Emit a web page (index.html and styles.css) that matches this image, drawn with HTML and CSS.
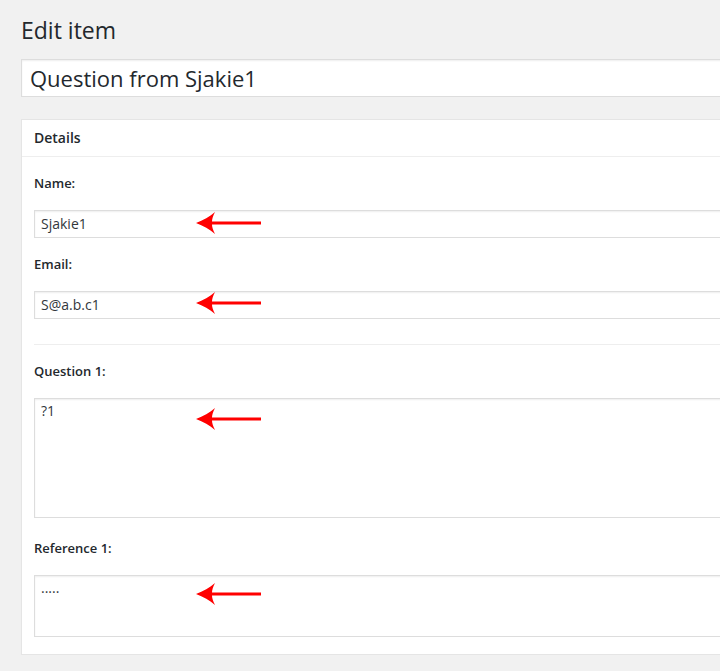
FILE: index.html
```html
<!DOCTYPE html>
<html lang="en">
<head>
<meta charset="utf-8">
<title>Edit item</title>
<link rel="stylesheet" href="styles.css">
</head>
<body>
<div class="wrap">
  <h1 class="page-title">Edit item</h1>
  <input class="title-input" type="text" value="Question from Sjakie1">
  <div class="postbox">
    <h2 class="hndle">Details</h2>
    <div class="inside">
      <div class="field">
        <label class="field-label">Name:</label>
        <div class="control">
          <input class="text-input" type="text" value="Sjakie1">
          <svg class="arrow arrow-name" viewBox="0 0 66 22" width="66" height="22"><path d="M0 11 C7 8.5 14 4.5 19 0 C17 4 16 7 16 9.5 L65 9.5 L65 12.5 L16 12.5 C16 15 17 18 19 22 C14 17.5 7 13.5 0 11 Z" fill="#f00"/></svg>
        </div>
      </div>
      <div class="field">
        <label class="field-label">Email:</label>
        <div class="control">
          <input class="text-input" type="text" value="S@a.b.c1">
          <svg class="arrow arrow-email" viewBox="0 0 66 22" width="66" height="22"><path d="M0 11 C7 8.5 14 4.5 19 0 C17 4 16 7 16 9.5 L65 9.5 L65 12.5 L16 12.5 C16 15 17 18 19 22 C14 17.5 7 13.5 0 11 Z" fill="#f00"/></svg>
        </div>
      </div>
      <hr class="sep">
      <div class="field">
        <label class="field-label">Question 1:</label>
        <div class="control">
          <textarea class="text-area tall">?1</textarea>
          <svg class="arrow arrow-question" viewBox="0 0 66 22" width="66" height="22"><path d="M0 11 C7 8.5 14 4.5 19 0 C17 4 16 7 16 9.5 L65 9.5 L65 12.5 L16 12.5 C16 15 17 18 19 22 C14 17.5 7 13.5 0 11 Z" fill="#f00"/></svg>
        </div>
      </div>
      <div class="field field-ref">
        <label class="field-label">Reference 1:</label>
        <div class="control">
          <textarea class="text-area short">.....</textarea>
          <svg class="arrow arrow-ref" viewBox="0 0 66 22" width="66" height="22"><path d="M0 11 C7 8.5 14 4.5 19 0 C17 4 16 7 16 9.5 L65 9.5 L65 12.5 L16 12.5 C16 15 17 18 19 22 C14 17.5 7 13.5 0 11 Z" fill="#f00"/></svg>
        </div>
      </div>
    </div>
  </div>
</div>
</body>
</html>
```
FILE: styles.css
```css
html, body {
  margin: 0;
  padding: 0;
  overflow: hidden;
  background: #f1f1f1;
}

body {
  font-family: "Open Sans", "Liberation Sans", sans-serif;
  color: #23282d;
  font-size: 13px;
}

.wrap {
  width: 1000px;
  margin-left: 21px;
  padding-top: 16px;
}

.page-title {
  margin: 0;
  font-size: 23px;
  font-weight: 400;
  line-height: 29px;
  color: #23282d;
}

.title-input {
  display: block;
  box-sizing: border-box;
  width: 100%;
  height: 38px;
  margin: 14px 0 0;
  padding: 3px 8px;
  font-family: inherit;
  font-size: 22px;
  line-height: normal;
  color: #23282d;
  background: #fff;
  border: 1px solid #ddd;
  box-shadow: inset 0 1px 2px rgba(0, 0, 0, 0.07);
  outline: none;
}

.postbox {
  margin-top: 22px;
  background: #fff;
  border: 1px solid #e5e5e5;
  box-shadow: 0 1px 1px rgba(0, 0, 0, 0.04);
}

.hndle {
  margin: 0;
  padding: 8px 12px;
  font-size: 14px;
  font-weight: 600;
  line-height: 1.4;
  border-bottom: 1px solid #eee;
  color: #23282d;
}

.inside {
  padding: 17px 12px 17px;
}

.field + .field {
  margin-top: 17px;
}

.field-ref {
  margin-top: 21px !important;
}

.field-label {
  display: block;
  margin-bottom: 17px;
  font-size: 13px;
  font-weight: 600;
  line-height: 19px;
  color: #23282d;
}

.control {
  position: relative;
}

.text-input,
.text-area {
  display: block;
  box-sizing: border-box;
  width: 100%;
  margin: 0;
  font-family: inherit;
  font-size: 14px;
  color: #32373c;
  background: #fff;
  border: 1px solid #ddd;
  box-shadow: inset 0 1px 2px rgba(0, 0, 0, 0.07);
  outline: none;
}

.text-input {
  height: 28px;
  padding: 0 6px;
  line-height: normal;
}

.text-area {
  padding: 2px 6px;
  line-height: 1.4;
  resize: none;
}

.text-area.tall {
  height: 120px;
}

.text-area.short {
  height: 62px;
}

.sep {
  margin: 25px 0 17px;
  border: 0;
  border-top: 1px solid #eee;
  height: 0;
}

.arrow {
  position: absolute;
  left: 162px;
}

.arrow-name { top: 2px; }
.arrow-email { top: 1px; }
.arrow-question { top: 10px; }
.arrow-ref { top: 8px; }
```
